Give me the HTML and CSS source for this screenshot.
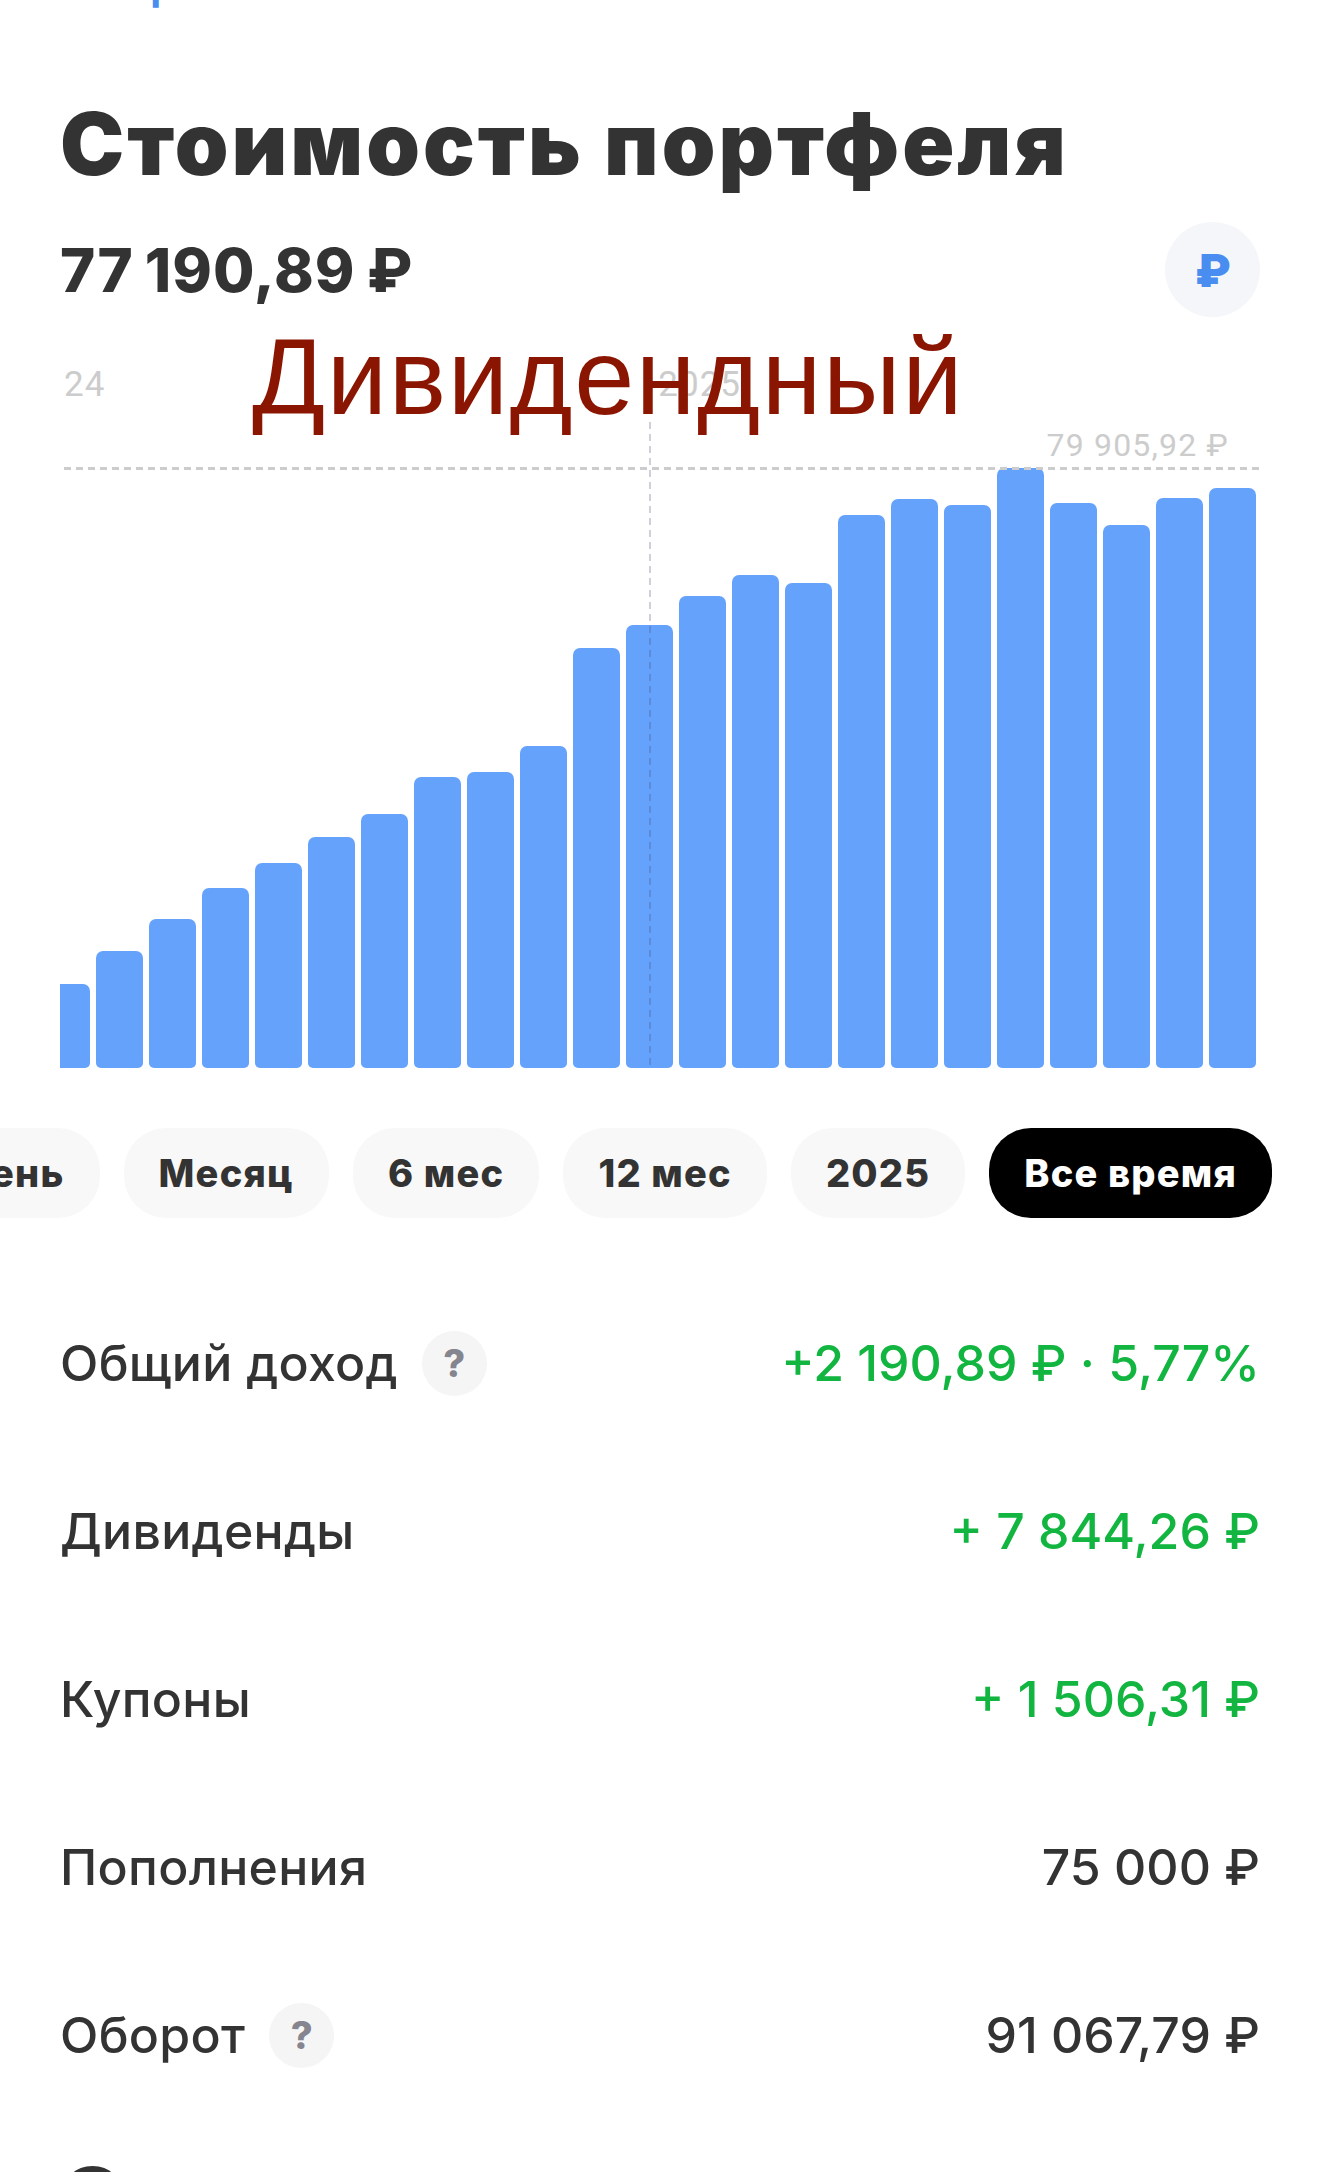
FILE: index.html
```html
<!DOCTYPE html>
<html>
<head>
    <title>Стоимость портфеля</title>
    <link rel="stylesheet" href="styles.css">
</head>
<body>
    <div class="stub">
        <span class="stub-grey">34</span>
        <span class="stub-blue">р</span>
    </div>

    <h1 class="title">Стоимость портфеля</h1>

    <div class="total-row">
        <div class="total">77 190,89 ₽</div>
        <div class="currency">₽</div>
    </div>

    <div class="chart">
        <div class="watermark">Дивидендный</div>
        <div class="year-row">
            <span class="year">24</span>
            <span class="year year-next">2025</span>
        </div>
        <div class="max-label">79 905,92 ₽</div>
        <div class="max-line"></div>
        <div class="year-line"></div>
        <div class="bars">
            <div class="bar bar-first" style="height: 84px"></div>
            <div class="bar" style="height: 117px"></div>
            <div class="bar" style="height: 149px"></div>
            <div class="bar" style="height: 180px"></div>
            <div class="bar" style="height: 205px"></div>
            <div class="bar" style="height: 231px"></div>
            <div class="bar" style="height: 254px"></div>
            <div class="bar" style="height: 291px"></div>
            <div class="bar" style="height: 296px"></div>
            <div class="bar" style="height: 322px"></div>
            <div class="bar" style="height: 420px"></div>
            <div class="bar" style="height: 443px"></div>
            <div class="bar" style="height: 472px"></div>
            <div class="bar" style="height: 493px"></div>
            <div class="bar" style="height: 485px"></div>
            <div class="bar" style="height: 553px"></div>
            <div class="bar" style="height: 569px"></div>
            <div class="bar" style="height: 563px"></div>
            <div class="bar" style="height: 600px"></div>
            <div class="bar" style="height: 565px"></div>
            <div class="bar" style="height: 543px"></div>
            <div class="bar" style="height: 570px"></div>
            <div class="bar" style="height: 580px"></div>
        </div>
    </div>

    <div class="periods">
        <div class="pill">День</div>
        <div class="pill">Месяц</div>
        <div class="pill">6 мес</div>
        <div class="pill">12 мес</div>
        <div class="pill">2025</div>
        <div class="pill pill-active">Все время</div>
    </div>

    <div class="stats">
        <div class="stat">
            <div class="stat-name">Общий доход <span class="hint">?</span></div>
            <div class="stat-value green">+2 190,89 ₽ · 5,77%</div>
        </div>
        <div class="stat">
            <div class="stat-name">Дивиденды</div>
            <div class="stat-value green">+ 7 844,26 ₽</div>
        </div>
        <div class="stat">
            <div class="stat-name">Купоны</div>
            <div class="stat-value green">+ 1 506,31 ₽</div>
        </div>
        <div class="stat">
            <div class="stat-name">Пополнения</div>
            <div class="stat-value">75 000 ₽</div>
        </div>
        <div class="stat">
            <div class="stat-name">Оборот <span class="hint">?</span></div>
            <div class="stat-value">91 067,79 ₽</div>
        </div>
    </div>
    <div class="next-title">О</div>
</body>
</html>
```
FILE: styles.css
```css
html, body {
    margin: 0;
    height: 2172px;
    overflow: hidden;
}
body {
    background: #fff;
    color: #333;
    font-family: Inter, "Liberation Sans", sans-serif;
}

.stub {
    height: 8px;
    padding-left: 62px;
    overflow: hidden;
    font-size: 40px;
    font-weight: 700;
    line-height: 8px;
}
.stub span {
    position: relative;
    top: -18px;
}
.stub-grey {
    color: #8a93a3;
}
.stub-blue {
    margin-left: 26px;
    color: #4a8df0;
}

.title {
    margin: 86px 0 0 60px;
    font-size: 86px;
    line-height: 100px;
    font-weight: 900;
    letter-spacing: 3px;
    white-space: nowrap;
}

.total-row {
    display: flex;
    justify-content: space-between;
    align-items: center;
    margin-top: 28px;
    padding: 0 60px;
}
.total {
    font-size: 60px;
    font-weight: 800;
    letter-spacing: 1px;
    word-spacing: -3px;
}
.currency {
    display: flex;
    justify-content: center;
    align-items: center;
    width: 95px;
    height: 95px;
    border-radius: 50%;
    background: #f5f6f9;
    color: #4a8df0;
    font-size: 46px;
    font-weight: 900;
}

.chart {
    position: relative;
    display: flex;
    flex-direction: column;
    justify-content: space-between;
    height: 751px;
    margin-left: 60px;
    width: 1200px;
}
.watermark {
    position: absolute;
    left: 192px;
    top: -2px;
    z-index: 2;
    color: #8a1500;
    font-family: "Liberation Sans", sans-serif;
    font-size: 108px;
    line-height: 124px;
    letter-spacing: 1.6px;
    white-space: nowrap;
}
.year-row {
    display: flex;
    padding: 48px 0 0 4px;
}
.year {
    color: #ccc;
    font-family: Roboto, sans-serif;
    font-size: 35px;
    line-height: 40px;
    letter-spacing: 1px;
}
.year-next {
    margin-left: 553px;
}
.max-label {
    position: absolute;
    right: 31px;
    top: 108px;
    color: #ccc;
    font-family: Roboto, sans-serif;
    font-size: 32px;
    line-height: 40px;
    letter-spacing: 1.2px;
}
.max-line {
    position: absolute;
    left: 4px;
    right: 0;
    top: 150px;
    z-index: 1;
    height: 3px;
    background: repeating-linear-gradient(90deg, #ccc 0 7px, transparent 7px 12px);
}
.year-line {
    position: absolute;
    left: 589px;
    top: 105px;
    bottom: 0;
    z-index: 1;
    width: 2px;
    background: repeating-linear-gradient(180deg, rgba(60, 70, 110, 0.25) 0 7px, transparent 7px 12px);
}
.bars {
    display: flex;
    align-items: flex-end;
    gap: 6px;
}
.bar {
    flex: none;
    width: 47px;
    background: #65a2fc;
    border-radius: 7px 7px 5px 5px;
}
.bar-first {
    width: 30px;
    border-radius: 0 7px 5px 0;
}

.periods {
    display: flex;
    justify-content: flex-end;
    gap: 24px;
    margin-top: 60px;
    padding-right: 48px;
    overflow: hidden;
}
.pill {
    flex: none;
    height: 90px;
    padding: 0 35px;
    border-radius: 42px;
    background: #f8f8f8;
    font-size: 38px;
    font-weight: 800;
    letter-spacing: 1.2px;
    line-height: 90px;
}
.pill-active {
    background: #000;
    color: #fff;
}

.stats {
    margin-top: 61px;
    padding: 0 60px;
}
.stat {
    display: flex;
    justify-content: space-between;
    align-items: center;
    height: 168px;
    font-size: 50px;
    font-weight: 500;
}
.stat-name {
    display: flex;
    align-items: center;
    gap: 24px;
    letter-spacing: 0.3px;
}
.green {
    color: #12b53f;
}
.hint {
    display: flex;
    justify-content: center;
    align-items: center;
    width: 65px;
    height: 65px;
    border-radius: 50%;
    background: #f5f5f6;
    color: #85858f;
    font-size: 38px;
    font-weight: 800;
}
.next-title {
    margin: 29px 0 0 60px;
    font-size: 84px;
    font-weight: 900;
    line-height: 100px;
}
```
